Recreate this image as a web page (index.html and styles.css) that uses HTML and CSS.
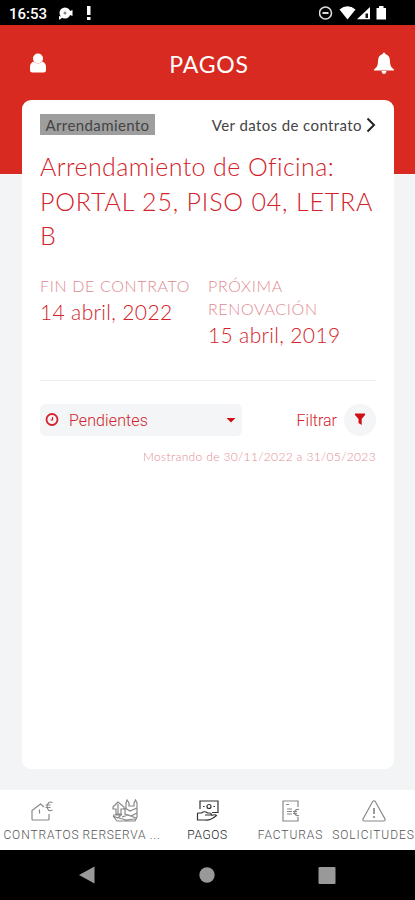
FILE: index.html
```html
<!DOCTYPE html>
<html lang="es">
<head>
  <meta charset="UTF-8" />
  <meta name="viewport" content="width=device-width, initial-scale=1" />
  <title>Pagos</title>
  <link rel="stylesheet" href="styles.css">
</head>
<body>
  <div class="statusbar">
    <span class="clock">16:53</span>
    <svg class="status-left" width="34" height="16" viewBox="0 0 34 16" fill="#fff">
      <circle cx="7" cy="8" r="5.500"/>
      <path d="M1 11l4 1-3 2.500H1zM12 6l2.500-1v6L12 10z"/>
      <circle cx="7" cy="8" r="1.500" fill="#888"/>
      <path d="M29 1h3.500v9H29zM29 12h3.500v3H29z"/>
    </svg>
    <svg class="status-right" width="70" height="16" viewBox="0 0 70 16" fill="#fff">
      <circle cx="6.500" cy="8" r="6" fill="none" stroke="#ddd" stroke-width="1.600"/>
      <path d="M3.500 7h6v2h-6z" fill="#ddd"/>
      <path d="M20.500 4.500Q28.500-2 36.500 4.500L28.500 14.500z"/>
      <path d="M51 2v12.300H38z"/>
      <path d="M46.500 8.500h2.500v4.500h-2.500z" fill="#111"/>
      <path d="M57.500 3h2.500V1h4.500v2H67v11.500h-9.500z"/>
    </svg>
  </div>

  <header class="header">
    <svg width="18" height="20" viewBox="0 0 18 20" fill="#fff">
      <circle cx="9" cy="5.500" r="5"/>
      <path d="M4.500 8.500Q9 12.500 13.500 8.500Q17 10 17 14v3q0 2.500-2.500 2.500h-11Q1 19.500 1 17v-3q0-4 3.500-5.500z"/>
    </svg>
    <h1>PAGOS</h1>
    <svg width="22" height="23" viewBox="0 0 22 23" fill="#fff">
      <path d="M9.700 2q0-1.500 1.300-1.500T12.300 2Q17 3.300 17 9c0 5 1.500 6.500 4 8.500v1H1v-1C3.500 15.500 5 14 5 9q0-5.700 4.700-7zM8.500 19h5Q13 22 11 22t-2.500-3z"/>
    </svg>
  </header>

  <main class="card">
    <div class="card-top">
      <span class="tag">Arrendamiento</span>
      <a class="details" href="#"><span>Ver datos de contrato</span>
        <svg width="10" height="16" viewBox="0 0 10 16" fill="none" stroke="#222" stroke-width="2"><path d="M1.500 1.500L8 8l-6.500 6.500"/></svg>
      </a>
    </div>

    <h2><span class="kind">Arrendamiento de Oficina:</span><br>PORTAL 25, PISO 04, LETRA<br>B</h2>

    <div class="dates">
      <div>
        <div class="label">FIN DE CONTRATO</div>
        <div class="date">14 abril, 2022</div>
      </div>
      <div>
        <div class="label">PRÓXIMA<br>RENOVACIÓN</div>
        <div class="date">15 abril, 2019</div>
      </div>
    </div>

    <div class="filters">
      <div class="select">
        <svg width="14" height="14" viewBox="0 0 14 14" fill="none" stroke="#d3222a"><circle cx="7" cy="6.500" r="5.500" stroke-width="1.800"/><path d="M7.500 4v3H5.500" stroke-width="1.200"/></svg>
        <span class="status">Pendientes</span>
        <svg width="10" height="6" viewBox="0 0 10 6" fill="#d10f17"><path d="M.5 1h9L5 5.500z"/></svg>
      </div>
      <span class="filter-text">Filtrar</span>
      <span class="filter-btn">
        <svg width="12" height="13" viewBox="0 0 12 13" fill="#d10f17"><path d="M1 .5h10V2L7.700 6v6L4.500 10V6L1 2z"/></svg>
      </span>
    </div>
    <p class="range">Mostrando de 30/11/2022 a 31/05/2023</p>
  </main>

  <nav class="tabs">
    <a class="tab contracts" href="#">
      <svg width="24" height="24" viewBox="0 0 24 24"><path d="M14 8L10.500 5 2 11.500V20q0 1 1 1h15q1 0 1-1v-5M9.500 10.500v4M22.500 3.500q-4.500-2-5.500 4 1 6 5.500 3.500M15.500 6h5M15.500 8.500h5"/></svg>
      <span>CONTRATOS</span>
    </a>
    <a class="tab booking" href="#">
      <svg width="28" height="24" viewBox="0 0 28 24"><path d="M7 3L2 8v2h3v5h5v-5h3V8zM7 5v10M2 17l4 5h18l2-4V9M2 17l5 2 4-4M2 16h7M15 9V4l1-3 2 3v3h5V4l1.500-3L26 4v6M14 9l5 3 7-3M14 9v6l6 2 6-3M11 18l6-2 8 3M8 19l7 2 9-1"/></svg>
      <span>RERSERVA ...</span>
    </a>
    <a class="tab active" href="#">
      <svg width="24" height="24" viewBox="0 0 24 24"><path d="M4 10V2h18v11.500h-6M1.500 14h4q3-2.500 6 0h2q2 0 2 2H9M1.500 14v7H9q5 1 11.500-4.500-1-1.500-5 0"/><circle cx="13" cy="7.500" r="2"/><path d="M7 7.500h1.500M17.500 7.500H19"/></svg>
      <span>PAGOS</span>
    </a>
    <a class="tab invoices" href="#">
      <svg width="24" height="24" viewBox="0 0 24 24"><path d="M19 8V2H4v20h15v-4M7 5.500h3M8 10h5M8 12.500h5M8 15h5M20 10.500q-3.500-1-4.500 3 1 4 4.500 3M14 12.500h4M14 14.500h4"/></svg>
      <span>FACTURAS</span>
    </a>
    <a class="tab requests" href="#">
      <svg width="24" height="24" viewBox="0 0 24 24"><path d="M10.700 2.500q1.300-1.500 2.600 0L23 20q.5 2-1.500 2h-19Q.5 22 1 20z"/><path d="M12 9v6M12 17v2" stroke-width="1.700"/></svg>
      <span>SOLICITUDES</span>
    </a>
  </nav>

  <div class="navbar">
    <svg width="16" height="18" viewBox="0 0 16 18"><path d="M15.500.5v17L0 9z"/></svg>
    <svg width="16" height="16" viewBox="0 0 16 16"><circle cx="8" cy="8" r="7.700"/></svg>
    <svg width="18" height="17" viewBox="0 0 18 17"><rect x=".5" width="17" height="17" rx="1"/></svg>
  </div>
</body>
</html>
```

FILE: styles.css
```css
* {
  box-sizing: border-box;
}

body {
  margin: 0;
  height: 900px;
  display: flex;
  flex-direction: column;
  overflow: hidden;
  background: linear-gradient(#d82a20 174px, #f2f4f6 174px);
  font-family: Lato, "Open Sans", sans-serif;
  color: #d3222a;
}

svg {
  display: block;
  flex-shrink: 0;
}

a {
  color: inherit;
  text-decoration: none;
}

.statusbar {
  height: 25px;
  padding: 0 26px 0 9px;
  background: #000;
  color: #fff;
  display: flex;
  align-items: center;
}

.clock {
  font: 500 15px/25px Roboto, sans-serif;
  width: 49px;
  padding-top: 3px;
}

.status-right {
  margin-left: auto;
}

.header {
  height: 75px;
  padding: 1px 20px 0 29px;
  display: flex;
  align-items: center;
  justify-content: space-between;
}

h1 {
  margin: 2px 0 0;
  padding-right: 2px;
  color: #fff;
  font-size: 23px;
  font-weight: 400;
  line-height: 28px;
  letter-spacing: 0.8px;
}

.card {
  margin: 0 21px 0 22px;
  height: 669px;
  padding: 13px 18px 0;
  background: #fff;
  border-radius: 9px;
}

.card-top {
  display: flex;
  justify-content: space-between;
  align-items: center;
  height: 23px;
}

.tag {
  width: 115px;
  height: 21px;
  background: #9e9e9e;
  color: #444;
  font-size: 15px;
  line-height: 22px;
  letter-spacing: 0.4px;
  text-align: center;
  white-space: nowrap;
}

.details {
  display: flex;
  align-items: center;
  gap: 4px;
  color: #444;
  font-size: 15px;
  letter-spacing: 0.4px;
  white-space: nowrap;
}

h2 {
  margin: 13px 0 0;
  font-size: 25px;
  font-weight: 300;
  line-height: 34.5px;
  letter-spacing: 0.8px;
  white-space: nowrap;
}

.kind {
  letter-spacing: 0.4px;
}

.dates {
  display: grid;
  grid-template-columns: 168px 1fr;
  margin-top: 21px;
  height: 107px;
  border-bottom: 1px solid #eeeff1;
}

.label {
  font-size: 16px;
  font-weight: 300;
  line-height: 23px;
  letter-spacing: 0.65px;
  color: #df8a92;
}

.date {
  font-size: 21px;
  font-weight: 300;
  line-height: 29px;
  letter-spacing: 0.35px;
}

.filters {
  display: flex;
  align-items: center;
  margin-top: 23px;
  height: 32px;
}

.select {
  width: 202px;
  height: 32px;
  padding: 0 6px 0 5px;
  border-radius: 5px;
  background: #f3f5f7;
  display: flex;
  align-items: center;
}

.status {
  margin: 2px auto 0 10px;
  font: 300 16px Roboto, sans-serif;
  letter-spacing: 0.1px;
}

.filter-text {
  margin: 2px 7px 0 auto;
  font: 300 16px Roboto, sans-serif;
}

.filter-btn {
  width: 32px;
  height: 32px;
  border-radius: 50%;
  background: #f3f5f7;
  display: flex;
  align-items: center;
  justify-content: center;
}

.range {
  margin: 12px 0 0;
  text-align: right;
  font-size: 12px;
  font-weight: 300;
  line-height: 18px;
  letter-spacing: 0.35px;
  color: #df8a92;
  white-space: nowrap;
}

.tabs {
  margin-top: 21px;
  height: 60px;
  background: #fff;
  display: grid;
  grid-template-columns: repeat(5, 83px);
}

.tab {
  display: flex;
  flex-direction: column;
  align-items: center;
  padding-top: 9px;
  font: 300 12px/20px Roboto, sans-serif;
  letter-spacing: 0.9px;
  white-space: nowrap;
  color: #555;
}

.tab svg {
  fill: none;
  stroke: #888;
  stroke-width: 1.2;
}

.tab span {
  margin-top: 2px;
}

.booking span {
  margin-left: -6px;
  letter-spacing: 0.7px;
}

.active {
  color: #222;
  letter-spacing: 0.6px;
}

.tab.active svg {
  stroke: #333;
}

.navbar {
  height: 50px;
  padding: 0 79px;
  background: #000;
  display: flex;
  align-items: center;
  justify-content: space-between;
}

.navbar svg {
  fill: #999;
}
```
